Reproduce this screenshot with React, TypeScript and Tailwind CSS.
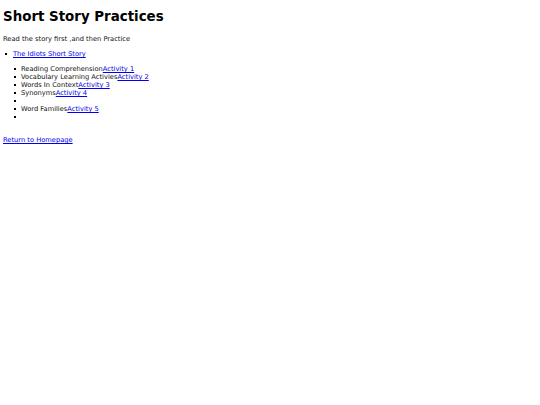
const ACTIVITIES = [
  { label: "Reading Comprehension", link: "Activity 1" },
  { label: "Vocabulary Learning Activies", link: "Activity 2" },
  { label: "Words In Context", link: "Activity 3" },
  { label: "Synonyms", link: "Activity 4" },
  { label: "", link: "" },
  { label: "Word Families", link: "Activity 5" },
  { label: "", link: "" },
];

function Bullet() {
  return <span className="inline-block w-[2px] h-[2px] bg-black mr-[5px] align-middle" />;
}

export default function App() {
  return (
    <div className="min-h-screen bg-white text-[#111] px-[3px] pt-[8px] font-['DejaVu_Sans',Verdana,sans-serif] text-[6.7px] leading-[8px]">
      <h1 className="text-[13.4px] leading-[17px] font-bold text-black">Short Story Practices</h1>
      <p className="mt-[10px]">Read the story first ,and then Practice</p>
      <ul className="mt-[7px]">
        <li className="flex items-center pl-[2px]">
          <span className="inline-block w-[2px] h-[2px] bg-black mr-[6px]" />
          <a href="#" className="text-[#0000ee] underline">The Idiots Short Story</a>
        </li>
      </ul>
      <ul className="mt-[7px] pl-[11px]">
        {ACTIVITIES.map((a, i) => (
          <li key={i} className="flex items-center h-[8px]">
            <Bullet />
            <span>{a.label}</span>
            {a.link && <a href="#" className="text-[#0000ee] underline">{a.link}</a>}
          </li>
        ))}
      </ul>
      <div className="mt-[15px]">
        <a href="#" className="text-[#0000ee] underline">Return to Homepage</a>
      </div>
    </div>
  );
}
